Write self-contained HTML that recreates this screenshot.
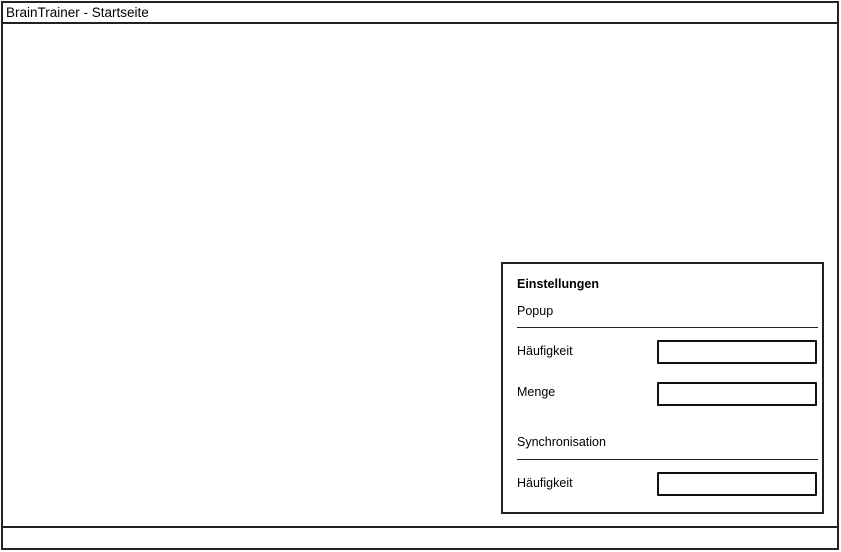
<!DOCTYPE html>
<html><head><style>
body{margin:0;width:841px;height:552px;background:#fff;position:relative;overflow:hidden;font-family:"Liberation Sans",sans-serif;color:#000}
div{position:absolute;box-sizing:border-box}
.t{font-size:12.5px;white-space:nowrap}
.in{border:2px solid #111;border-radius:1px;width:160px;height:24px;left:657px}
.ln{height:1px;background:#222;left:517px;width:301px}
</style></head><body>
<div style="left:1px;top:1px;width:838px;height:549px;border:2px solid #222"></div>
<div style="left:2px;top:22px;width:836px;height:2px;background:#222"></div>
<div style="left:2px;top:526px;width:836px;height:2px;background:#222"></div>
<div class="t" style="left:6px;top:5px;font-size:13.5px">BrainTrainer - Startseite</div>
<div style="left:501px;top:262px;width:323px;height:252px;border:2px solid #222"></div>
<div class="t" style="left:517px;top:277px;font-weight:bold">Einstellungen</div>
<div class="t" style="left:517px;top:304px">Popup</div>
<div class="ln" style="top:327px"></div>
<div class="t" style="left:517px;top:344px">Häufigkeit</div>
<div class="in" style="top:340px"></div>
<div class="t" style="left:517px;top:385px">Menge</div>
<div class="in" style="top:382px"></div>
<div class="t" style="left:517px;top:435px">Synchronisation</div>
<div class="ln" style="top:459px"></div>
<div class="t" style="left:517px;top:476px">Häufigkeit</div>
<div class="in" style="top:472px"></div>
</body></html>
